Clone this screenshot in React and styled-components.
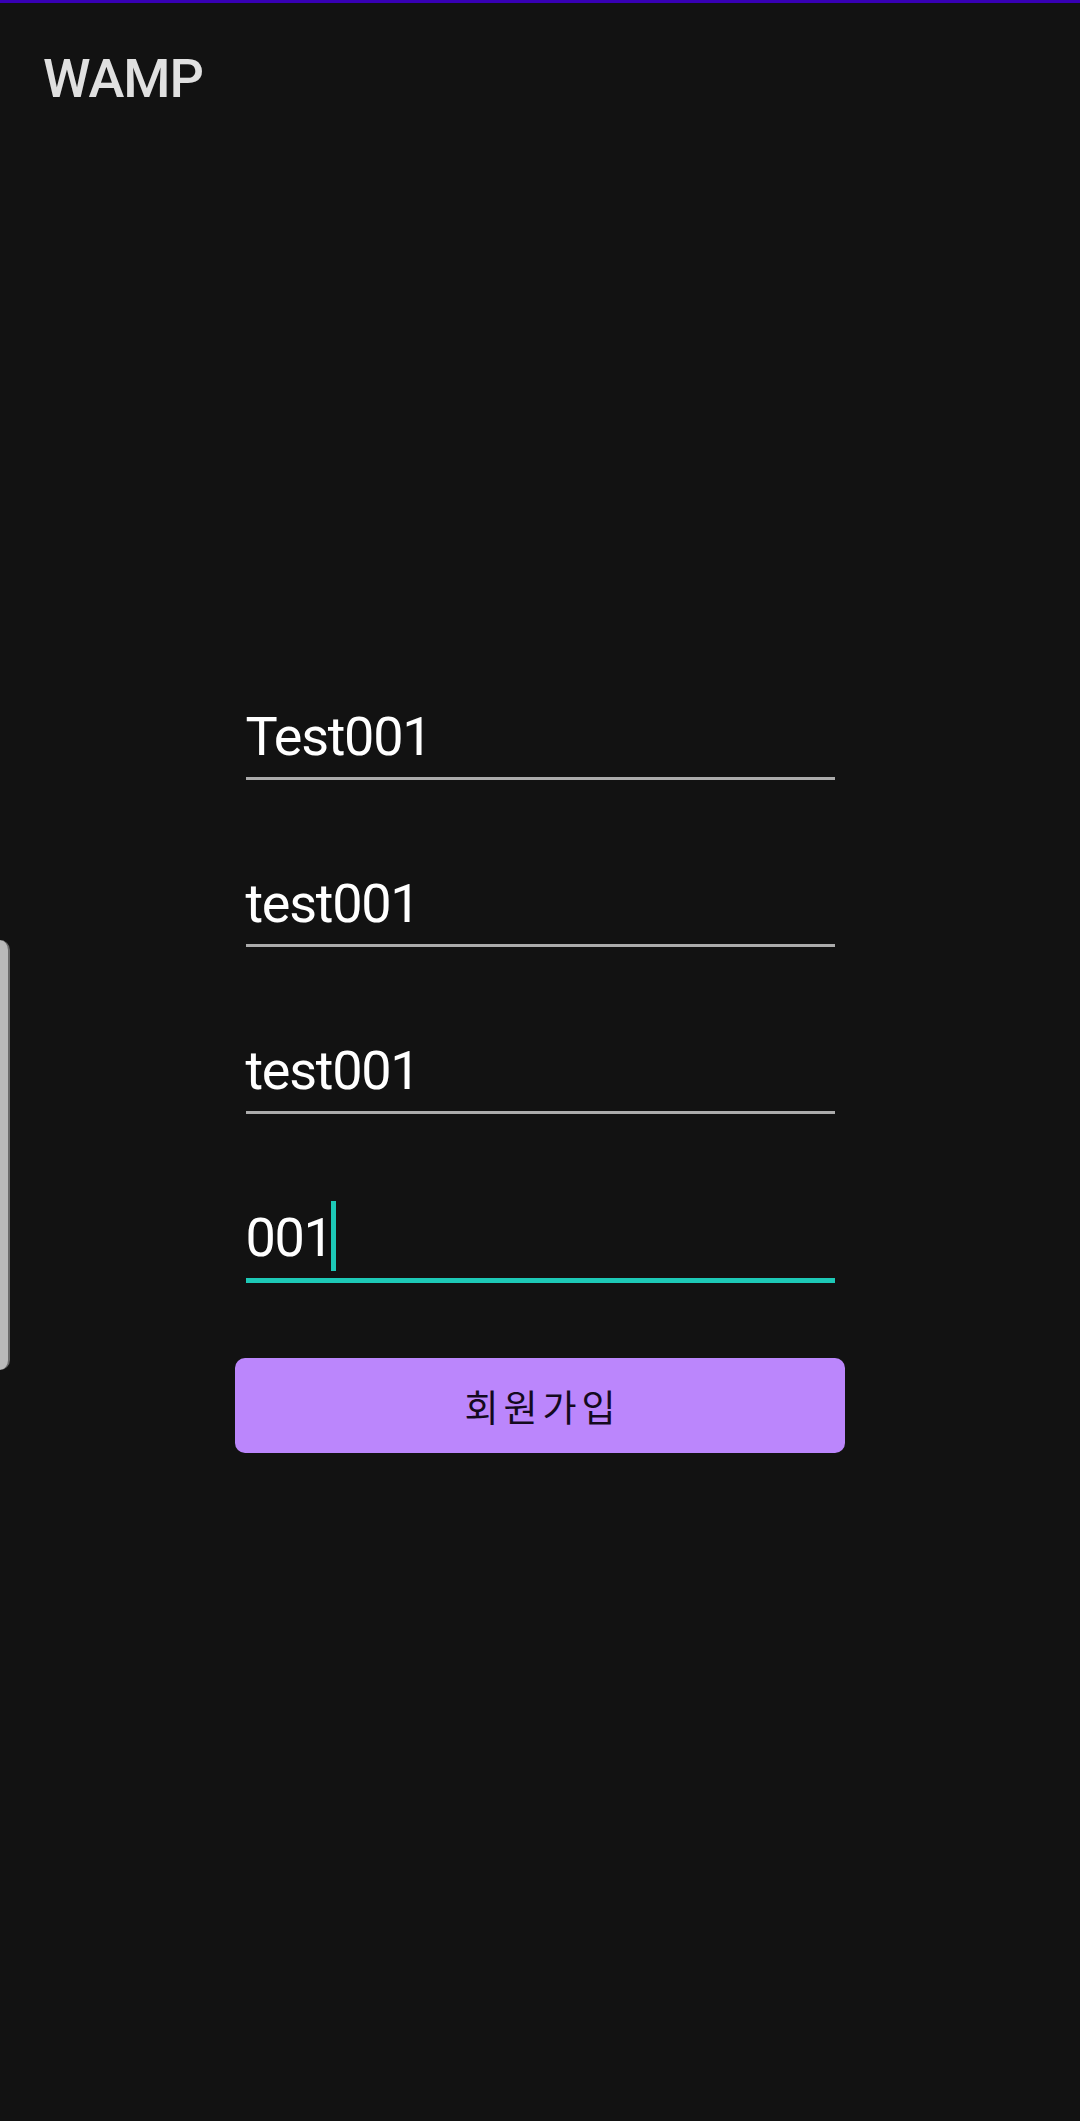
import React from 'react'
import styled, { createGlobalStyle } from 'styled-components'

// --- constants ---
const COLORS = {
  bg: '#121212',
  primaryDark: '#3700B3',
  primary: '#BB86FC',
  accent: '#1DC9B7',
  title: '#E0E0E0',
  text: '#FFFFFF',
  line: '#ABABAB',
}

const FIELDS = [
  { id: 'name', value: 'Test001' },
  { id: 'id', value: 'test001' },
  { id: 'password', value: 'test001' },
  { id: 'phone', value: '001', focused: true },
]

const GlobalStyle = createGlobalStyle`
  html, body {
    margin: 0;
    padding: 0;
    background: ${COLORS.bg};
  }
  * {
    box-sizing: border-box;
  }
`

const App = () => {
  return (
    <>
      <GlobalStyle />
      <Screen>
        <Toolbar>
          <Title>WAMP</Title>
        </Toolbar>
        <Form>
          {FIELDS.map((field) => (
            <Field key={field.id}>
              <FieldText>
                {field.value}
                {field.focused && <Caret />}
              </FieldText>
              <Underline $focused={field.focused} />
            </Field>
          ))}
          <SubmitBtn type="button">회원가입</SubmitBtn>
        </Form>
        <EdgeHandle />
      </Screen>
    </>
  )
}

const Screen = styled.div`
  position: relative;
  min-height: 2121px;
  background-color: ${COLORS.bg};
  border-top: 3px solid ${COLORS.primaryDark};
  font-family: Roboto, 'Noto Sans', sans-serif;
`

const Toolbar = styled.header`
  display: flex;
  align-items: center;
  padding: 44px 43px 0;
`

const Title = styled.h1`
  margin: 0;
  font-size: 54px;
  line-height: 64px;
  font-weight: 500;
  letter-spacing: -1px;
  color: ${COLORS.title};
`

const Form = styled.main`
  display: flex;
  flex-direction: column;
  align-items: center;
  margin-top: 594px;
`

const Field = styled.div`
  display: flex;
  flex-direction: column;
  width: 589px;
  margin-bottom: 92px;

  &:last-of-type {
    margin-bottom: 75px;
  }
`

const FieldText = styled.div`
  height: 64px;
  font-size: 54px;
  line-height: 64px;
  letter-spacing: -1.3px;
  color: ${COLORS.text};
  white-space: nowrap;
`

const Caret = styled.span`
  display: inline-block;
  vertical-align: top;
  width: 5px;
  height: 70px;
  margin: -5px 0 -1px -2px;
  background-color: ${COLORS.accent};
`

const Underline = styled.div`
  margin-top: 8px;
  height: ${({ $focused }) => ($focused ? '5px' : '3px')};
  background-color: ${({ $focused }) => ($focused ? COLORS.accent : COLORS.line)};
`

const SubmitBtn = styled.button`
  width: 610px;
  height: 95px;
  padding: 0 0 0 5px;
  border: none;
  border-radius: 10px;
  background-color: ${COLORS.primary};
  color: #140a1e;
  font-family: 'Noto Sans CJK KR', Roboto, sans-serif;
  font-size: 37px;
  font-weight: 400;
  letter-spacing: 5px;
  cursor: pointer;
`

const EdgeHandle = styled.div`
  position: absolute;
  left: 0;
  top: 937px;
  width: 10px;
  height: 430px;
  background-color: #b9b9b9;
  border-right: 2px solid #6a6a6a;
  border-radius: 0 11px 11px 0;
`

export default App
